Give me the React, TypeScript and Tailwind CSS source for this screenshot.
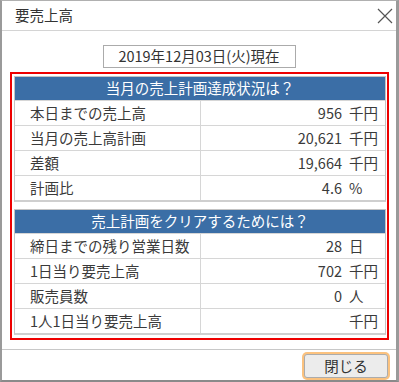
import React from "react";

const font = { fontFamily: '"Noto Sans CJK JP", "Noto Sans", sans-serif' };

type Row = [string, string, string];

const panel1: Row[] = [
  ["本日までの売上高", "956", "千円"],
  ["当月の売上高計画", "20,621", "千円"],
  ["差額", "19,664", "千円"],
  ["計画比", "4.6", "%"],
];

const panel2: Row[] = [
  ["締日までの残り営業日数", "28", "日"],
  ["1日当り要売上高", "702", "千円"],
  ["販売員数", "0", "人"],
  ["1人1日当り要売上高", "", "千円"],
];

function Panel({ title, rows }: { title: string; rows: Row[] }) {
  return (
    <div className="border border-[#c4c4c4] border-b-2 border-b-[#cfcfcf] bg-white">
      <div className="h-[23px] bg-[#3b6ea6] text-white flex items-center justify-center text-[14.5px] leading-none">
        {title}
      </div>
      {rows.map((r, i) => (
        <div key={i} className="h-[25px] flex border-t border-[#d6d6d6] text-[14.5px] leading-none text-[#3a3a3a]">
          <div className="w-[186px] border-r border-[#d6d6d6] pl-[15px] flex items-center whitespace-nowrap">
            {r[0]}
          </div>
          <div className="flex-1 flex items-center">
            <div className="flex-1 text-right pr-[3px]">{r[1]}</div>
            <div className="w-[40px] pl-[4px]">{r[2]}</div>
          </div>
        </div>
      ))}
    </div>
  );
}

export default function App() {
  return (
    <div
      style={font}
      className="w-[399px] h-[382px] bg-white border-t border-t-[#b0b0b0] border-l-2 border-l-[#9a9a9a] border-r-[3px] border-r-[#9a9a9a] border-b-2 border-b-[#8a8a8a] flex flex-col text-[#333]"
    >
      <div className="h-[30px] shrink-0 border-b border-[#d4d4d4] flex items-center justify-between pl-[13px] pr-[3px]">
        <span className="text-[14.5px] leading-none text-[#333]">要売上高</span>
        <svg width="16" height="16" viewBox="0 0 16 16" className="mt-[1px]">
          <path d="M1 1 L15 15 M15 1 L1 15" stroke="#555" strokeWidth="1.2" fill="none" />
        </svg>
      </div>
      <div className="flex-1 flex flex-col">
        <div className="flex justify-center mt-[14px]">
          <div className="w-[193px] h-[23px] border border-[#ababab] flex items-center justify-center text-[14.5px] leading-none text-[#333]">
            2019年12月03日(火)現在
          </div>
        </div>
        <div className="mt-[4px] ml-[8px] mr-[7px] border-2 border-[#ee0000] pt-[2px] pl-[2px] pr-[1px] pb-[3px] flex flex-col gap-[7px]">
          <Panel title="当月の売上計画達成状況は？" rows={panel1} />
          <Panel title="売上計画をクリアするためには？" rows={panel2} />
        </div>
      </div>
      <div className="h-[31px] shrink-0 border-t border-[#c8c8c8] flex items-start justify-end pr-[8px] pt-[4px]">
        <button
          style={font}
          className="w-[84px] h-[24px] rounded-[3px] border border-[#acacac] bg-[#ececec] shadow-[0_0_0_2px_#fbc27f] text-[14.5px] leading-none text-[#333] flex items-center justify-center"
        >
          閉じる
        </button>
      </div>
    </div>
  );
}
